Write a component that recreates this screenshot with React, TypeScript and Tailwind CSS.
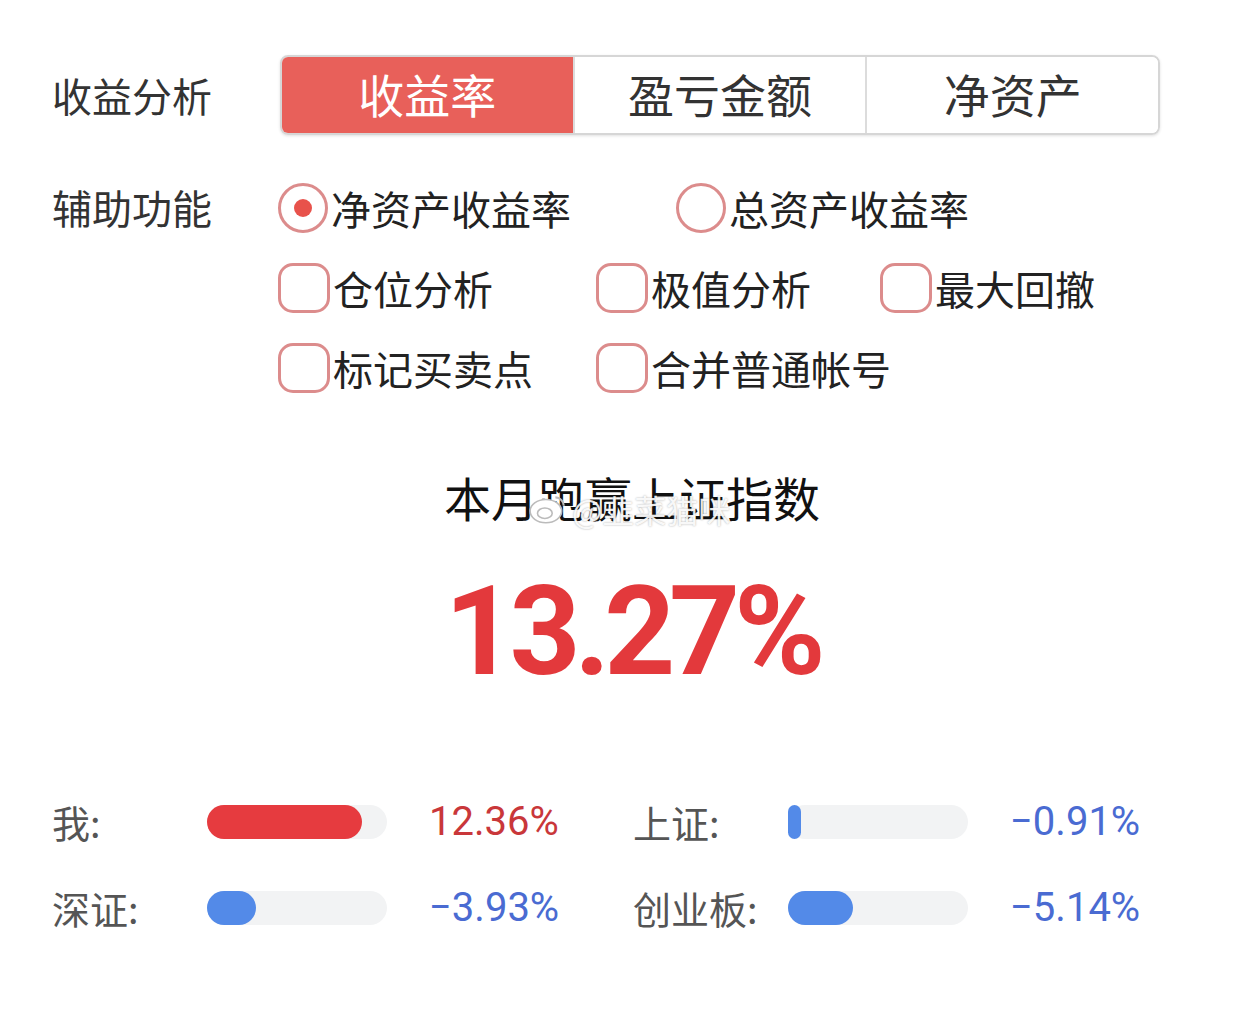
import { useState } from 'react'

const tabs = ['收益率', '盈亏金额', '净资产']

const compare = [
  [
    { label: '我:', pct: 86, value: '12.36%', fill: 'bg-[#e63b3f]', text: 'text-[#c9373a]' },
    { label: '深证:', pct: 27, value: '−3.93%', fill: 'bg-[#538ae8]', text: 'text-[#4a6bd2]' },
  ],
  [
    { label: '上证:', pct: 7, value: '−0.91%', fill: 'bg-[#538ae8]', text: 'text-[#4a6bd2]' },
    { label: '创业板:', pct: 36, value: '−5.14%', fill: 'bg-[#538ae8]', text: 'text-[#4a6bd2]' },
  ],
]

function Radio({ checked, label }: { checked?: boolean; label: string }) {
  return (
    <div className="flex items-center">
      <span className="flex h-[50px] w-[50px] items-center justify-center rounded-full border-[3px] border-[#dc8c8c]">
        {checked && <span className="h-[18px] w-[18px] rounded-full bg-[#e8524b]" />}
      </span>
      <span className="ml-[3px] text-[40px] leading-none text-[#222]">{label}</span>
    </div>
  )
}

function Check({ label }: { label: string }) {
  return (
    <div className="flex items-center">
      <span className="h-[50px] w-[52px] rounded-[15px] border-[3px] border-[#dc8c8c]" />
      <span className="ml-[3px] text-[40px] leading-none text-[#222]">{label}</span>
    </div>
  )
}

export default function App() {
  const [tab, setTab] = useState(0)

  return (
    <div
      className="relative h-[1034px] w-[1258px] bg-white"
      style={{ fontFamily: '"Noto Sans CJK SC", "Noto Sans", sans-serif' }}
    >
      <div className="flex items-center pl-[52px] pt-[55px]">
        <span className="w-[228px] text-[40px] leading-none text-[#333]">收益分析</span>
        <div className="flex h-[80px] w-[880px] overflow-hidden rounded-lg border-2 border-[#d6d6d6] shadow-[0_1px_3px_rgba(0,0,0,0.12)]">
          {tabs.map((t, i) => (
            <button
              key={t}
              onClick={() => setTab(i)}
              className={`flex flex-1 items-center justify-center pb-[4px] text-[46px] leading-none ${
                i > 0 ? 'border-l-2 border-[#dcdcdc]' : ''
              } ${tab === i ? 'bg-[#e8605a] text-white' : 'bg-white text-[#333]'}`}
            >
              {t}
            </button>
          ))}
        </div>
      </div>

      <div className="mt-[48px] flex pl-[52px]">
        <span className="mt-[4px] w-[226px] text-[40px] leading-none text-[#333]">辅助功能</span>
        <div className="flex flex-col gap-[30px]">
          <div className="flex">
            <div className="w-[398px]">
              <Radio checked label="净资产收益率" />
            </div>
            <Radio label="总资产收益率" />
          </div>
          <div className="flex">
            <div className="w-[318px]">
              <Check label="仓位分析" />
            </div>
            <div className="w-[284px]">
              <Check label="极值分析" />
            </div>
            <Check label="最大回撤" />
          </div>
          <div className="flex">
            <div className="w-[318px]">
              <Check label="标记买卖点" />
            </div>
            <Check label="合并普通帐号" />
          </div>
        </div>
      </div>

      <div className="relative mt-[80px] flex flex-col items-center pl-[6px]">
        <div className="text-[47px] leading-none text-[#111]">本月跑赢上证指数</div>
        <div
          className="mt-[50px] text-[124px] font-bold leading-none tracking-[-0.05em] text-[#e3393c]"
          style={{ fontFamily: 'Roboto, "Liberation Sans", sans-serif' }}
        >
          13.27%
        </div>
        <div className="absolute left-[528px] top-[20px] flex items-center gap-1 text-[32px] leading-none text-white/90 [text-shadow:0_0_2px_rgba(0,0,0,0.35)]">
          <svg width="40" height="32" viewBox="0 0 38 30">
            <ellipse cx="17" cy="17" rx="15" ry="11" fill="white" stroke="#bbb" strokeWidth="1.5" />
            <ellipse cx="16" cy="19" rx="7" ry="5" fill="none" stroke="#bbb" strokeWidth="1.5" />
            <path d="M26 4 a8 8 0 0 1 8 8" fill="none" stroke="#bbb" strokeWidth="2" />
          </svg>
          <span>@韭菜猫咪</span>
        </div>
      </div>

      <div className="mt-[108px] flex pl-[52px]">
        {compare.map((col, ci) => (
          <div key={ci} className={`flex flex-col gap-[46px] ${ci === 0 ? 'w-[581px]' : ''}`}>
            {col.map((r) => (
              <div key={r.label} className="flex items-center">
                <span className="w-[155px] text-[38px] leading-none text-[#555]">{r.label}</span>
                <div className="h-[34px] w-[180px] rounded-full bg-[#f2f3f4]">
                  <div className={`h-full rounded-full ${r.fill}`} style={{ width: `${r.pct}%` }} />
                </div>
                <span
                  className={`ml-[42px] text-[40px] leading-none ${r.text}`}
                  style={{ fontFamily: 'Roboto, "Liberation Sans", sans-serif' }}
                >
                  {r.value}
                </span>
              </div>
            ))}
          </div>
        ))}
      </div>
    </div>
  )
}
